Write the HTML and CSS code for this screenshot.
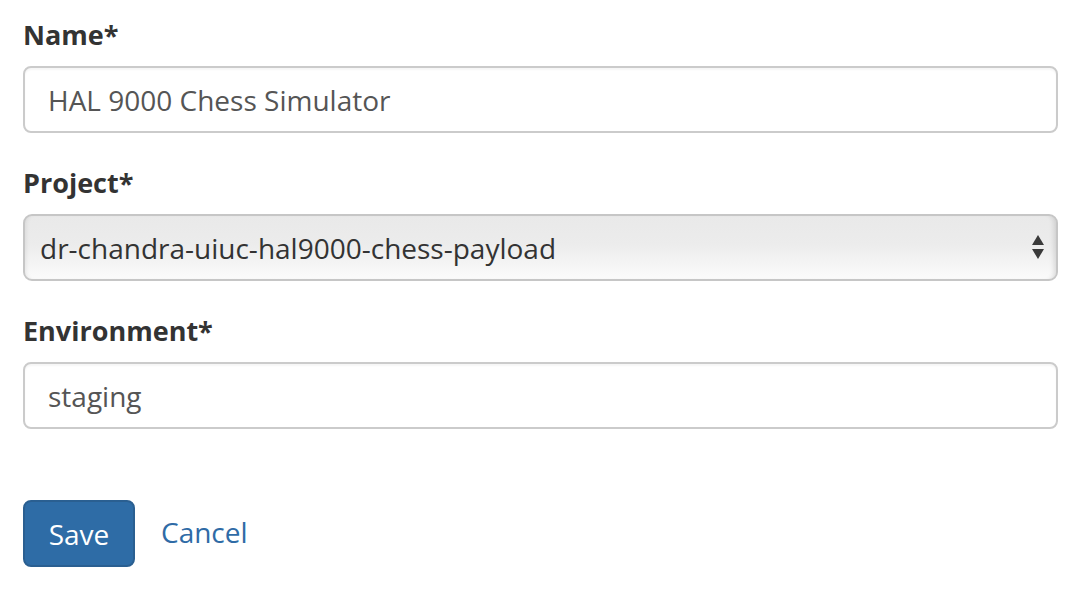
FILE: index.html
```html
<!DOCTYPE html>
<html>
<head>
<meta charset="utf-8">
<link rel="stylesheet" href="styles.css">
</head>
<body>
<form class="form">
  <div class="group">
    <label class="label" for="name">Name*</label>
    <input class="input" id="name" type="text" value="HAL 9000 Chess Simulator">
  </div>
  <div class="group">
    <label class="label" for="project">Project*</label>
    <div class="select-wrap">
      <select class="select" id="project">
        <option>dr-chandra-uiuc-hal9000-chess-payload</option>
      </select>
      <svg class="arrows" width="14" height="28" viewBox="0 0 14 28">
        <path d="M7 2 L13 12 L1 12 Z" fill="#3a3a3a"/>
        <path d="M1 16 L13 16 L7 26 Z" fill="#3a3a3a"/>
      </svg>
    </div>
  </div>
  <div class="group">
    <label class="label" for="env">Environment*</label>
    <input class="input" id="env" type="text" value="staging">
  </div>
  <div class="actions">
    <button type="button" class="btn">Save</button>
    <a class="link" href="#">Cancel</a>
  </div>
</form>
</body>
</html>
```

FILE: styles.css
```css
html, body {
  margin: 0;
  padding: 0;
  background: #fff;
}
body {
  font-family: "Open Sans", "Liberation Sans", sans-serif;
  color: #333;
}
.form {
  padding: 17px 28px 0 23px;
  width: 1035px;
}
.group {
  margin-bottom: 32px;
}
.label {
  display: block;
  font-size: 27px;
  line-height: 36px;
  font-weight: 700;
  color: #333;
  margin-bottom: 13px;
}
.input {
  display: block;
  box-sizing: border-box;
  width: 100%;
  height: 67px;
  border: 2px solid #cbcbcb;
  border-radius: 8px;
  padding: 0 23px;
  font-family: "Open Sans", "Liberation Sans", sans-serif;
  font-size: 28px;
  color: #555;
  background: #fff;
  outline: none;
  box-shadow: inset 0 2px 2px rgba(0,0,0,0.04);
}
.select-wrap {
  position: relative;
}
.select {
  display: block;
  box-sizing: border-box;
  width: 100%;
  height: 67px;
  -webkit-appearance: none;
  appearance: none;
  border: 2px solid #c6c6c6;
  border-radius: 9px;
  padding: 0 15px;
  font-family: "Open Sans", "Liberation Sans", sans-serif;
  font-size: 28px;
  color: #333;
  background: linear-gradient(#e9e9e9, #ececec 45%, #fbfbfb);
  box-shadow: inset 4px 0 4px -3px rgba(0,0,0,0.08), inset -6px 0 5px -4px rgba(0,0,0,0.12);
  outline: none;
}
.arrows {
  position: absolute;
  right: 13px;
  top: 19px;
}
.actions {
  display: flex;
  align-items: center;
  gap: 26px;
  margin-top: 71px;
}
.btn {
  box-sizing: border-box;
  width: 112px;
  height: 67px;
  background: #2e6ca6;
  border: 2px solid #2a5f91;
  border-radius: 8px;
  color: #fff;
  font-family: "Open Sans", "Liberation Sans", sans-serif;
  font-size: 28px;
  padding: 0;
}
.link {
  font-size: 28px;
  color: #2f6ba6;
  text-decoration: none;
  margin-top: -3px;
}
```
